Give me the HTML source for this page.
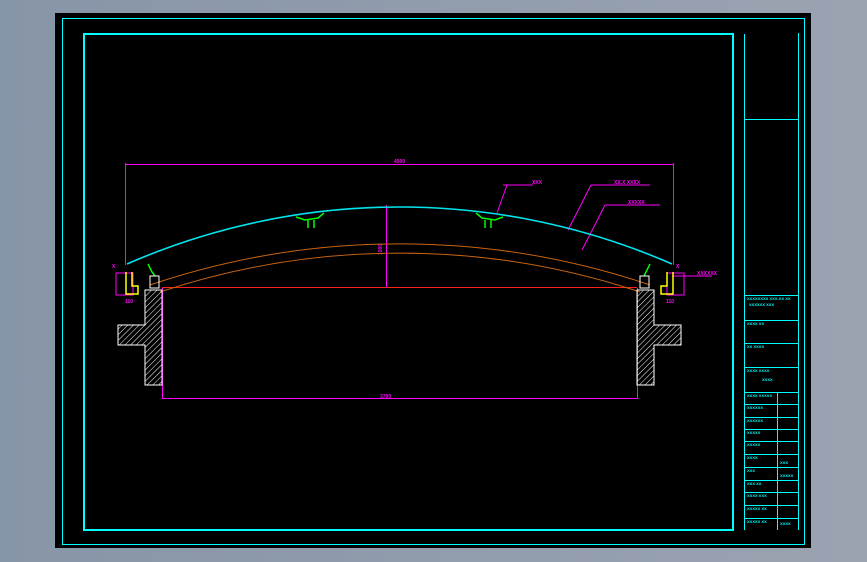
<!DOCTYPE html>
<html><head><meta charset="utf-8"><style>
html,body{margin:0;padding:0;background:#8a97a9;}
body{width:867px;height:562px;overflow:hidden;background:linear-gradient(90deg,#8795a8,#9aa3b0);}
svg{display:block}
text{font-family:"Liberation Sans","Noto Sans CJK SC",sans-serif;font-weight:bold}
</style></head><body>
<svg width="867" height="562" viewBox="0 0 867 562" xmlns="http://www.w3.org/2000/svg">
<defs>
<pattern id="h" width="4" height="4" patternUnits="userSpaceOnUse" patternTransform="rotate(45)">
<line x1="0" y1="0" x2="0" y2="4" stroke="#fff" stroke-width="1"/></pattern>
</defs>
<rect x="55" y="13" width="756" height="535" fill="#000"/>
<rect x="62.5" y="18.5" width="742" height="526" fill="none" stroke="#00ffff" stroke-width="1"/>
<rect x="84" y="34" width="649" height="496" fill="none" stroke="#00ffff" stroke-width="2"/>
<g stroke="#00ffff" stroke-width="1" fill="none">
<line x1="744.5" y1="34" x2="744.5" y2="530"/>
<line x1="798.5" y1="33" x2="798.5" y2="530"/>
<line x1="744" y1="119.5" x2="798" y2="119.5"/>
<line x1="744" y1="295.5" x2="798" y2="295.5"/>
<line x1="744" y1="320.5" x2="798" y2="320.5"/>
<line x1="744" y1="343.5" x2="798" y2="343.5"/>
<line x1="744" y1="367.5" x2="798" y2="367.5"/>
<line x1="744" y1="392.5" x2="798" y2="392.5"/>
<line x1="744" y1="404.5" x2="798" y2="404.5"/>
<line x1="744" y1="417.5" x2="798" y2="417.5"/>
<line x1="744" y1="429.5" x2="798" y2="429.5"/>
<line x1="744" y1="441.5" x2="798" y2="441.5"/>
<line x1="744" y1="454.5" x2="798" y2="454.5"/>
<line x1="744" y1="467.5" x2="798" y2="467.5"/>
<line x1="744" y1="480.5" x2="798" y2="480.5"/>
<line x1="744" y1="492.5" x2="798" y2="492.5"/>
<line x1="744" y1="505.5" x2="798" y2="505.5"/>
<line x1="744" y1="518.5" x2="798" y2="518.5"/>
<line x1="777.5" y1="392" x2="777.5" y2="530"/>
</g>
<g fill="#00ffff" font-size="4">
<text x="747" y="300">XXXXXXXX XXX-XX XX</text>
<text x="749" y="306">XXXXXX XXX</text>
<text x="747" y="325">XXXX XX</text>
<text x="747" y="348">XX XXXX</text>
<text x="747" y="372">XXXX XXXX</text>
<text x="762" y="381">XXXX</text>
<text x="747" y="397">XXXX XXXXX</text>
<text x="747" y="409">XXXXXX</text>
<text x="747" y="422">XXXXXX</text>
<text x="747" y="434">XXXXX</text>
<text x="747" y="446">XXXXX</text>
<text x="747" y="459">XXXX</text>
<text x="780" y="464">XXX</text>
<text x="747" y="472">XXX</text>
<text x="780" y="477">XXXXX</text>
<text x="747" y="485">XXX XX</text>
<text x="747" y="497">XXXX XXX</text>
<text x="747" y="510">XXXXX XX</text>
<text x="747" y="523">XXXXX XX</text>
<text x="780" y="525">XXXX</text>
</g>
<g stroke="#ff00ff" stroke-width="1" fill="none">
<line x1="125" y1="164.5" x2="673" y2="164.5"/>
<line x1="125.5" y1="163" x2="125.5" y2="265"/>
<line x1="673.5" y1="163" x2="673.5" y2="265"/>
<line x1="386.5" y1="205" x2="386.5" y2="288"/>
<line x1="162.5" y1="288" x2="162.5" y2="399"/>
<line x1="637.5" y1="288" x2="637.5" y2="399"/>
<line x1="162" y1="398.5" x2="637" y2="398.5"/>
<polyline points="503,185 533,185"/><polyline points="497,213 507,185"/>
<polyline points="591,185 650,185"/><polyline points="568,230 591,185"/>
<polyline points="605,205 660,205"/><polyline points="582,250 605,205"/>
<polyline points="672,276 712,276"/>
<rect x="116" y="273" width="17" height="22"/>
<rect x="667" y="273" width="17" height="22"/>
</g>
<g fill="#ff00ff" font-size="5">
<text x="394" y="163">4500</text>
<text x="382" y="255" transform="rotate(-90 382 255)">1000</text>
<text x="380" y="398">3700</text>
<text x="532" y="184">XXX</text>
<text x="614" y="184">XX.X XXXX</text>
<text x="628" y="204">XXXXX</text>
<text x="697" y="275">XXXXXX</text>
<text x="112" y="268">X</text><text x="676" y="268">X</text>
<text x="125" y="303">110</text><text x="666" y="303">110</text>
</g>
<line x1="162" y1="287.5" x2="637" y2="287.5" stroke="#ff2020" stroke-width="1"/>
<path d="M150 285 A 780 780 0 0 1 650 285" fill="none" stroke="#c86410" stroke-width="1"/>
<path d="M160 292 A 760 760 0 0 1 640 292" fill="none" stroke="#c86410" stroke-width="1"/>
<path d="M127 264 A 680 680 0 0 1 672 264" fill="none" stroke="#00e5ee" stroke-width="1.6"/>
<g stroke="#00ff00" stroke-width="1.5" fill="none">
<path d="M296 217 L305 220 L318 218 L324 213"/><path d="M308 220 L308 228 M314 220 L314 228"/>
<path d="M476 213 L482 218 L495 220 L503 217"/><path d="M485 220 L485 228 M491 220 L491 228"/>
<path d="M148 264 L152 272 L155 276"/><path d="M650 264 L646 272 L644 276"/>
</g>
<g stroke="#fff" stroke-width="1">
<path d="M145 290 H162 V385 H145 V345 H118 V325 H145 Z" fill="url(#h)"/>
<rect x="150" y="276" width="9" height="12" fill="none"/>
<path d="M654 290 H637 V385 H654 V345 H681 V325 H654 Z" fill="url(#h)"/>
<rect x="640" y="276" width="9" height="12" fill="none"/>
</g>
<g stroke="#ffff00" stroke-width="1.5" fill="none">
<path d="M126 272 V294 H138 V286 H132 V272"/>
<path d="M673 272 V294 H661 V286 H667 V272"/>
</g>
</svg>
</body></html>
